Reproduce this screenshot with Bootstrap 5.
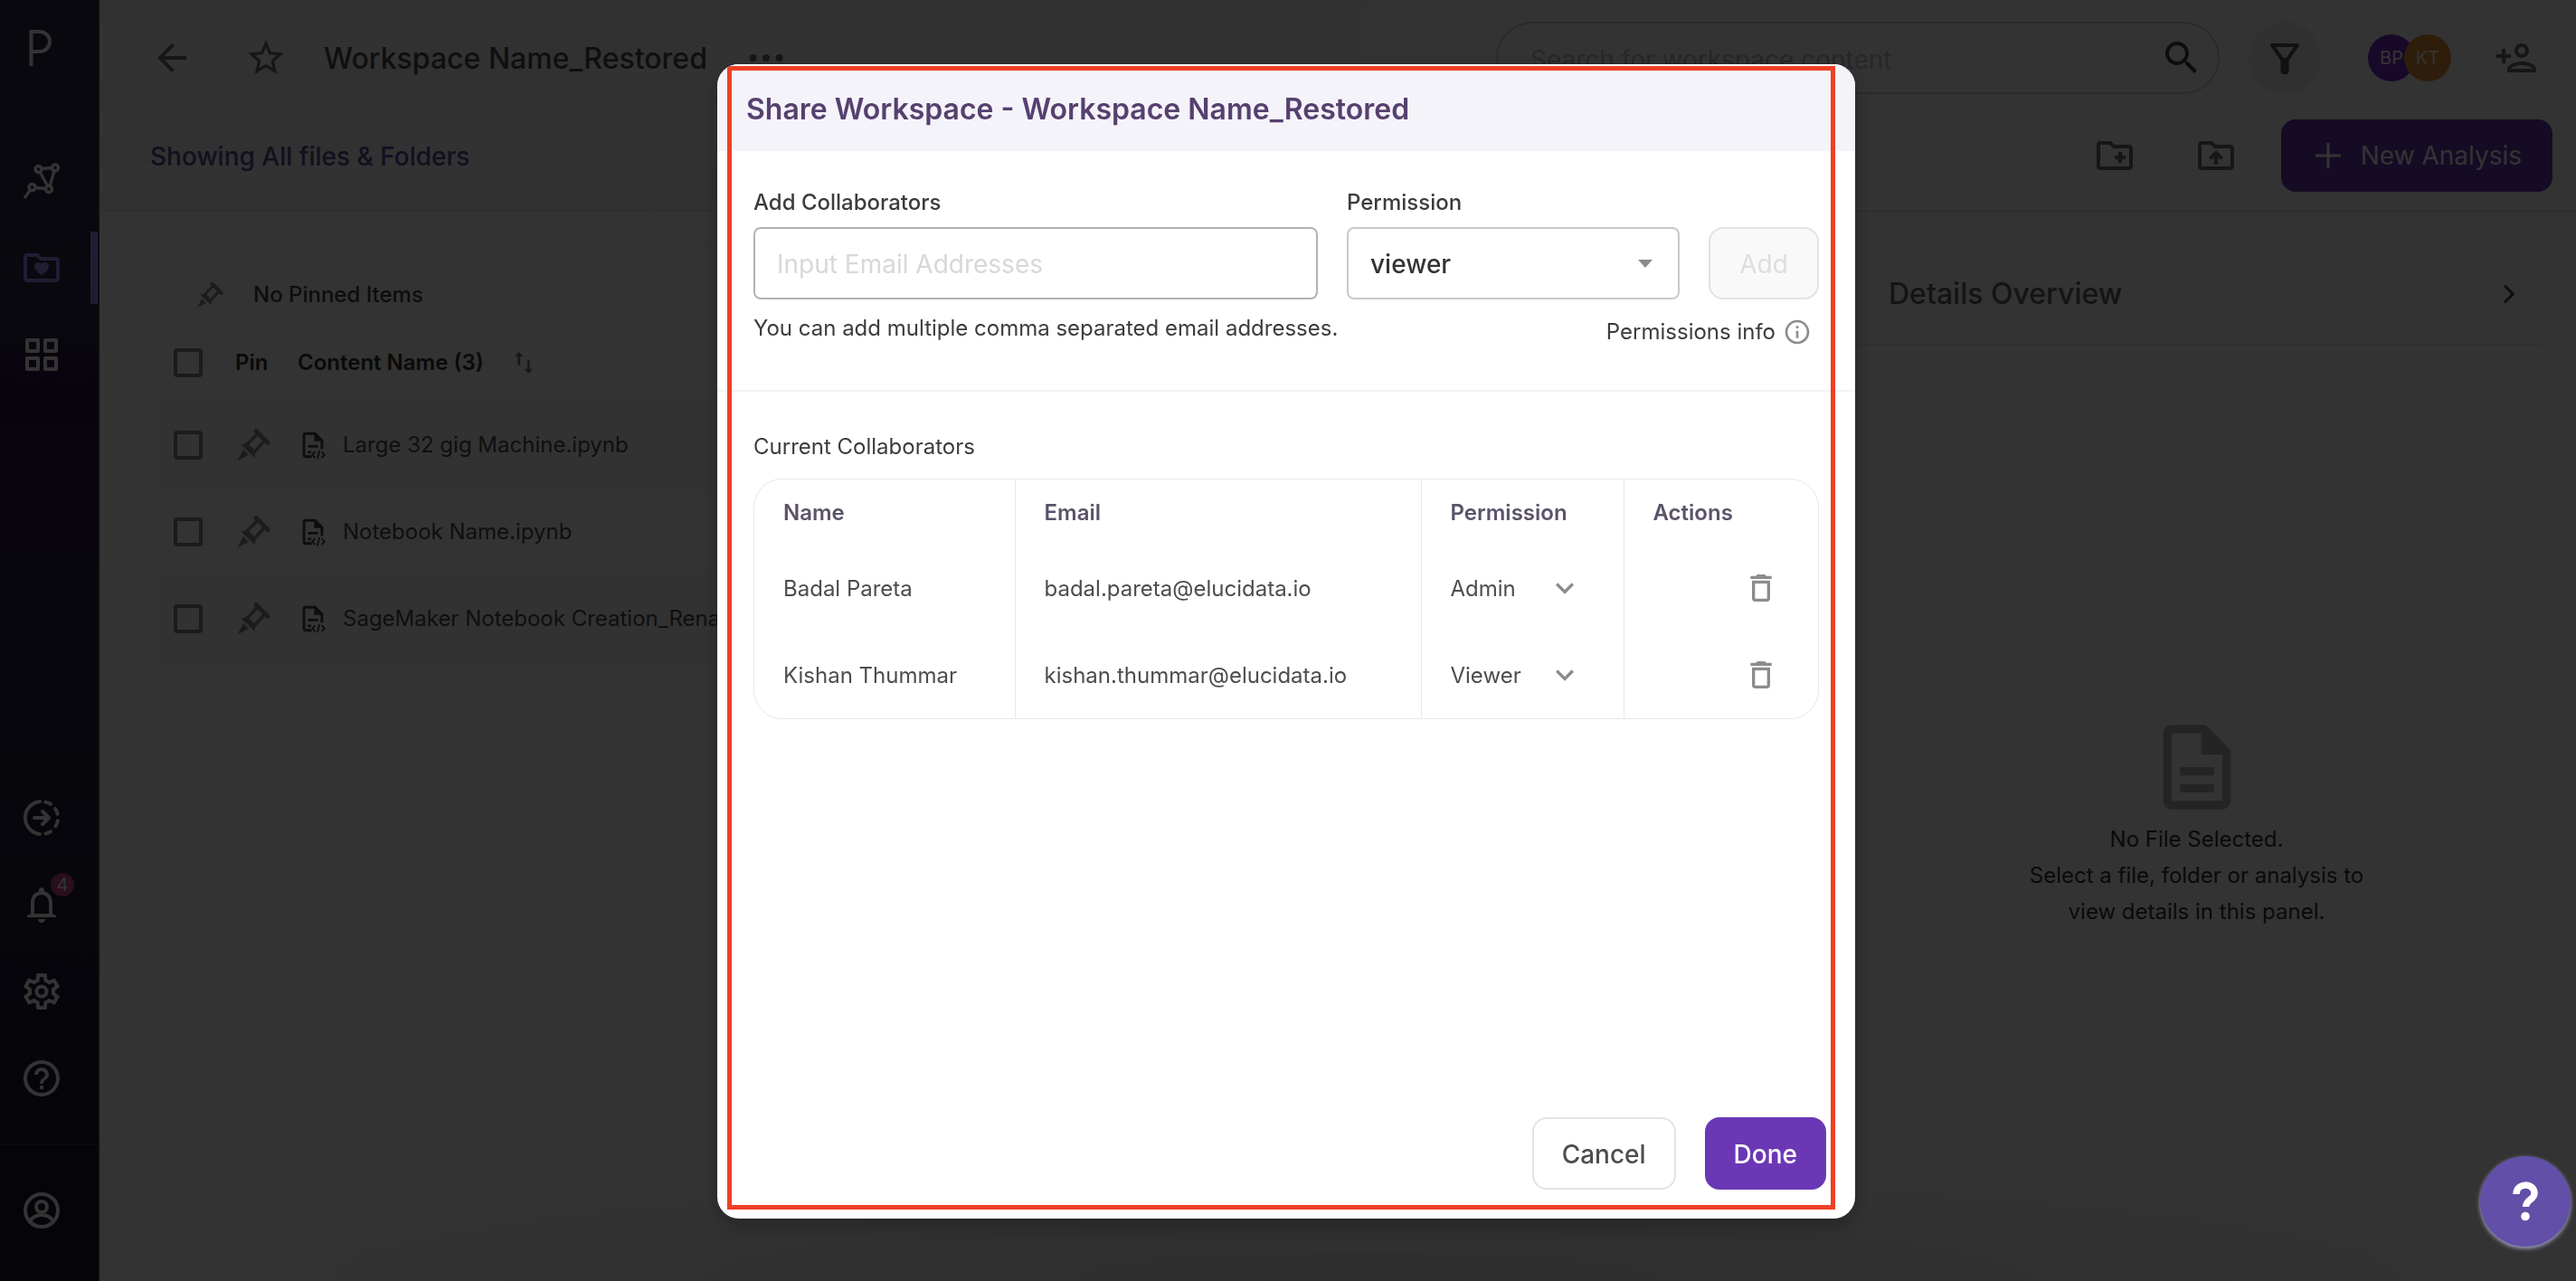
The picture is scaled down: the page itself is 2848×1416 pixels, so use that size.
<!DOCTYPE html>
<html lang="en">
<head>
<meta charset="utf-8">
<meta name="viewport" content="width=device-width, initial-scale=1">
<title>Share Workspace</title>
<link href="https://cdn.jsdelivr.net/npm/bootstrap@5.3.0/dist/css/bootstrap.min.css" rel="stylesheet">
<style>
  :root { --bs-body-font-family: Inter, "Noto Sans", sans-serif; --bs-body-font-size: 24px; --bs-body-line-height: 32px; --ink: #4d4d4d; --violet: #6b38b5; }
  body { color: var(--ink); }
  svg { display: block; flex: none; fill: currentColor; }
  .ic { width: 48px; height: 48px; }
  .ic-md { width: 40px; height: 40px; }
  .ic-sm { width: 32px; height: 32px; }
  .plain { border: 0; background: none; padding: 0; color: inherit; display: block; }
  .ln { fill: none; stroke: currentColor; stroke-width: 2; stroke-linecap: round; stroke-linejoin: round; }

  /* sidebar */
  .side { width: 110px; flex: none; color: #fff; border-right: 2px solid #3c3c55; background: linear-gradient(#2a2c46, #2d2d4a 26%, #2d1645 28%, #2a1c44 40%, #23233f 60%, #14142d); }
  .side a { display: flex; align-items: center; height: 80px; padding-left: 22px; color: #fff; position: relative; }
  .side a.current { color: #a091ff; border-right: 8px solid #a091ff; }
  .side .logo { height: 104px; }
  .side-top { gap: 16px; }
  .side-top .logo + a { margin-top: 40px; }
  .side-bottom { gap: 16px; padding-bottom: 32px; }
  .side-foot { border-top: 2px solid #32324b; padding: 32px 0 38px; }
  .bubble { position: absolute; left: 56px; top: 5px; width: 26px; height: 26px; line-height: 26px; font-size: 20px; text-align: center; border-radius: 50%; background: #d2468c; }

  /* top area */
  .top { position: relative; padding: 24px 26px 20px 56px; border-bottom: 2px solid #e9e9ee; overflow: hidden; color: #707070; }
  .waves { position: absolute; left: 0; top: 0; width: 1400px; height: 100%; }
  .bar { position: relative; height: 80px; }
  .bar-2 { margin-top: 28px; }
  .title { font-size: 32px; font-weight: 500; line-height: 40px; margin: 2px 40px 0; color: #4d4d4d; }
  .crumb { font-size: 28px; font-weight: 500; line-height: 40px; padding-top: 2px; color: #5f4a94; }
  .find { width: 800px; height: 80px; border: 2px solid #cfcaf0; border-radius: 40px; padding: 0 16px 0 36px; background: #fff; color: #444; }
  .find input { border: 0; outline: 0; font-size: 28px; background: none; padding: 3px 0 0; }
  .find input::placeholder { color: #c0c0c0; opacity: 1; }
  .round { width: 80px; height: 80px; border-radius: 50%; background: #f0f0f6; display: grid; place-items: center; color: #555; }
  .who { width: 52px; height: 52px; line-height: 52px; font-size: 20px; border-radius: 50%; text-align: center; color: #fff; }
  .who + .who { margin-left: -12px; }
  .btn-xl { --bs-btn-font-size: 28px; --bs-btn-border-radius: 16px; --bs-btn-border-width: 2px; --bs-btn-line-height: 40px; height: 80px; font-weight: 500; }
  .btn-violet { --bs-btn-bg: var(--violet); --bs-btn-color: #fff; --bs-btn-border-color: var(--violet); --bs-btn-hover-bg: #5b2da0; --bs-btn-hover-color: #fff; }
  .new { padding: 0 32px 0 26px; gap: 12px; font-weight: 400; }

  /* content panel */
  .stage { background: radial-gradient(ellipse 1300px 130px at 1400px 100%, #e0e0e0, #fff 100%); padding: 34px 27px 32px 42px; }
  .panel { border: 2px solid #f2f2f5; border-radius: 32px; }
  .files { padding: 24px; }
  .pinned { height: 64px; font-weight: 500; color: #444; gap: 32px; padding-left: 38px; }
  .grid { width: 100%; table-layout: fixed; }
  .grid th { height: 86px; font-weight: 600; color: #333; }
  .grid td { height: 96px; border-top: 2px solid #f3f3f3; }
  .grid tbody tr:nth-child(odd) { background: #fafafa; }
  .grid tbody tr:last-child td { border-bottom: 2px solid #f3f3f3; }
  .grid .c1 { width: 70px; padding-left: 14px; }
  .grid .c2 { width: 80px; padding-left: 12px; }
  .file-link { display: flex; align-items: center; gap: 16px; white-space: nowrap; color: inherit; text-decoration: none; }
  .file-link svg { width: 34px; height: 34px; }
  .tick { appearance: none; display: block; width: 32px; height: 32px; margin: 0; border: 4px solid #858585; border-radius: 4px; background: none; }
  .details { width: 773px; flex: none; }
  .details-head { height: 112px; padding: 0 22px 0 42px; margin-right: 8px; border-bottom: 2px solid #f0f0f0; }
  .details-head h2 { font-size: 32px; line-height: 40px; font-weight: 500; color: #666; margin: 0; }
  .empty { padding: 56px 8px 0 0; line-height: 40px; color: #333; }
  .empty svg { width: 112px; height: 112px; color: #b4b4b4; margin-bottom: 4px; }

  /* dialog */
  .modal-backdrop { --bs-backdrop-opacity: .8; }
  .modal-dialog { --bs-modal-width: 1258px; --bs-modal-margin: 71px; margin-bottom: 0; }
  .modal-content { --bs-modal-border-radius: 24px; --bs-modal-border-width: 0; min-height: calc(100vh - 140px); color: #3c3c3c; overflow: hidden; box-shadow: 0 8px 24px #0004; }
  .modal-header { background: #f5f3fa; height: 96px; padding: 2px 32px 0; border: 0; border-top: 2px solid #fff; border-radius: 0; }
  .modal-title { font-size: 32px; line-height: 40px; font-weight: 600; color: #56406f; }
  .modal-body { padding: 0; }
  .block-a { padding: 41px 40px 44px; border-bottom: 2px solid #f2f1f8; }
  .block-b { padding: 45px 40px; }
  .fields { gap: 32px; }
  .fields label { display: block; font-weight: 500; margin-bottom: 11px; }
  .box { display: block; width: 100%; height: 80px; border: 2px solid #b3b3b3; border-radius: 8px; padding: 2px 24px 0; font-size: 28px; background: #fff; color: #333; }
  .box::placeholder { color: #d8d8d8; opacity: 1; }
  .perm { width: 368px; }
  .perm .box { border-color: #c9c9c9; appearance: none; font-weight: 500; }
  .perm svg { position: absolute; right: 14px; top: 16px; color: #8c8c8c; pointer-events: none; }
  .btn-off { --bs-btn-disabled-color: #dedede; --bs-btn-disabled-bg: #f9f9f9; --bs-btn-disabled-border-color: #e3e2ea; --bs-btn-disabled-opacity: 1; width: 122px; padding: 2px 0 0; font-weight: 400; }
  .frame { border: 1px solid #e8e8ec; border-radius: 32px; }
  .people { width: 100%; table-layout: fixed; color: #4d4d4d; }
  .people th { height: 72px; font-weight: 600; color: #5b5368; }
  .people td { height: 96px; }
  .people th, .people td { padding: 2px 32px 0; }
  .people th + th, .people td + td { border-left: 1px solid #e8e8ec; }
  .people td:last-child { padding: 0 43px 0 0; }
  .people select { display: block; appearance: none; border: 0; background: none; padding: 0; width: 100%; color: inherit; }
  .pick { width: 148px; color: #4d4d4d; }
  .pick svg { position: absolute; right: 2px; top: -5px; color: #8c8c8c; pointer-events: none; }
  .modal-footer { border: 0; padding: 0 32px 32px; gap: 32px; }
  .modal-footer > * { margin: 0; }
  .btn-line { --bs-btn-color: #4d4d4d; --bs-btn-border-color: #e3e2ea; --bs-btn-bg: #fff; padding: 2px 31px 0; }
  .btn-done { padding: 2px 30px 0; }
  .callout-frame { position: absolute; inset: 2px 22px 10px 11px; border: 5px solid #ee4025; pointer-events: none; }
  .fab { position: fixed; right: 6px; bottom: 38px; z-index: 1080; width: 100px; height: 100px; border: 0; border-radius: 50%; background: #624fa8; color: #fff; box-shadow: 0 2px 5px #a9a9d0; display: grid; place-items: center; }
</style>
</head>
<body>
<svg width="0" height="0" class="position-absolute" aria-hidden="true"><defs>
  <g id="pin" fill="#8c8c8c"><path d="M23 4.500L36 17.500" fill="none" stroke="#8c8c8c" stroke-width="5" stroke-linecap="round"/><path d="M25 7L12 20.500M32.500 15L20.500 28.500M12 19.500L21 28.500" fill="none" stroke="#8c8c8c" stroke-width="3.600"/><path d="M6.500 19.500L14 18 22.500 26.500 21.500 34ZM9 25L15 31 2.500 37.500Z"/></g>
  <g id="nb"><path fill="#444" d="M6 2h8l6 6v7h-2V9h-5V4H6v16h5v2H6c-1.100 0-2-.9-2-2V4c0-1.100.9-2 2-2zm2 10h8v2H8zm0 4.500h2.500v2H8z"/><path d="M13.700 17L11.500 19.500l2.200 2.500M18.800 17l2.200 2.500-2.200 2.500M17 16.300l-1.500 6.500" fill="none" stroke="#444" stroke-width="1.300"/></g>
</defs></svg>

<div class="d-flex min-vh-100">
  <nav class="side d-flex flex-column justify-content-between" aria-label="Main">
    <div class="side-top d-flex flex-column">
      <a href="#" class="logo" aria-label="Home"><svg class="ic" viewBox="0 0 48 48"><path d="M12.500 45V7H22a11 11 0 0 1 0 22H12.500" fill="none" stroke="currentColor" stroke-width="4"/></svg></a>
      <a href="#" aria-label="Pipelines"><svg class="ic" viewBox="0 0 48 48"><g fill="none" stroke="currentColor" stroke-width="3.400"><circle cx="20.500" cy="11" r="3.500"/><circle cx="39" cy="9.500" r="3.500"/><circle cx="13.500" cy="31" r="3.500"/><circle cx="32" cy="33" r="3.500"/><path d="M24 10.500l11.500-1M38 13l-5 17M22 14l9 16M17 31.500l11.500 1M11.500 34L5 43"/></g></svg></a>
      <a href="#" class="current" aria-label="Workspaces"><svg class="ic" viewBox="0 0 24 24"><path d="M20 6h-8l-2-2H4c-1.100 0-2 .9-2 2v12c0 1.100.9 2 2 2h16c1.100 0 2-.9 2-2V8c0-1.100-.9-2-2-2zm0 12H4V6h5.200l2 2H20v10z"/><path d="M12 16.300C9 13.900 8 12.800 8 11.300 8 10 9 9 10.200 9c.7 0 1.400.3 1.800.9.4-.6 1.100-.9 1.800-.9C15 9 16 10 16 11.300c0 1.500-1 2.600-4 5z"/></svg></a>
      <a href="#" aria-label="Apps"><svg class="ic" viewBox="0 0 24 24"><g class="ln"><rect x="4" y="4" width="6" height="6"/><rect x="14" y="4" width="6" height="6"/><rect x="4" y="14" width="6" height="6"/><rect x="14" y="14" width="6" height="6"/></g></svg></a>
    </div>
    <div>
      <div class="side-bottom d-flex flex-column">
        <a href="#" aria-label="Activity"><svg class="ic" viewBox="0 0 24 24"><g class="ln"><path d="M11 3.050a9 9 0 0 0 0 17.900M14.200 3.300q1.500.3 2.800 1.100M19.500 7q1 1.300 1.300 2.900M20.900 13.700q-.3 1.500-1.100 2.900M17 19.600q-1.300.8-2.800 1.100M8 12h8M12.500 8.500L16 12l-3.500 3.500"/></g></svg></a>
        <a href="#" aria-label="Notifications"><svg class="ic" viewBox="0 0 24 24"><path d="M12 22c1.100 0 2-.9 2-2h-4c0 1.100.9 2 2 2zm6-5v-6c0-3.070-1.640-5.640-4.500-6.320V4c0-.83-.67-1.500-1.500-1.500s-1.500.67-1.500 1.500v.68C7.630 5.360 6 7.920 6 11v6l-2 1v1h16v-1l-2-1zm-2 0H8v-6c0-2.480 1.510-4.500 4-4.500s4 2.020 4 4.500v6z"/></svg><span class="bubble">4</span></a>
        <a href="#" aria-label="Settings"><svg class="ic" viewBox="0 0 24 24"><path fill-rule="evenodd" d="M9.250 22l-.4-3.200q-.325-.125-.612-.3t-.563-.375L4.700 19.375l-2.750-4.750 2.575-1.950Q4.500 12.500 4.500 12.338v-.675q0-.163.025-.338L1.950 9.375l2.750-4.750 2.975 1.250q.275-.2.575-.375t.6-.3l.4-3.200h5.500l.4 3.200q.325.125.613.3t.562.375l2.975-1.250 2.750 4.750-2.575 1.950q.025.175.025.338v.674q0 .163-.05.338l2.575 1.950-2.750 4.750-2.950-1.250q-.275.2-.575.375t-.6.3l-.4 3.200h-5.500Zm1.750-2h1.975l.35-2.650q.775-.2 1.438-.588t1.212-.937l2.475 1.025.975-1.700-2.150-1.625q.125-.35.175-.737T17.500 12q0-.4-.05-.787t-.175-.738l2.150-1.625-.975-1.700-2.475 1.050q-.55-.575-1.212-.962t-1.438-.588L13 4h-1.975l-.35 2.650q-.775.2-1.437.588t-1.213.937L5.550 7.150l-.975 1.700 2.150 1.600q-.125.375-.175.750t-.05.8q0 .4.05.775t.175.750l-2.150 1.625.975 1.700 2.475-1.050q.55.575 1.213.963t1.437.587L11 20Z"/><circle cx="12" cy="12" r="2.800" fill="none" stroke="currentColor" stroke-width="2"/></svg></a>
        <a href="#" aria-label="Help"><svg class="ic" viewBox="0 0 24 24"><path d="M11 18h2v-2h-2v2zm1-16C6.480 2 2 6.480 2 12s4.480 10 10 10 10-4.480 10-10S17.520 2 12 2zm0 18c-4.410 0-8-3.590-8-8s3.590-8 8-8 8 3.590 8 8-3.590 8-8 8zm0-14c-2.210 0-4 1.790-4 4h2c0-1.100.9-2 2-2s2 .9 2 2c0 2-3 1.750-3 5h2c0-2.250 3-2.500 3-5 0-2.210-1.790-4-4-4z"/></svg></a>
      </div>
      <div class="side-foot"><a href="#" aria-label="Account"><svg class="ic" viewBox="0 0 24 24"><g fill="none" stroke="currentColor" stroke-width="2"><circle cx="12" cy="12" r="9"/><circle cx="12" cy="10" r="3"/><path d="M5.500 18c1.500-2.500 4-3.500 6.500-3.500s5 1 6.500 3.500"/></g></svg></a></div>
    </div>
  </nav>

  <main class="flex-grow-1 d-flex flex-column" style="min-width:0">
    <header class="top">
      <svg class="waves" viewBox="0 0 1400 234" preserveAspectRatio="none" style="fill:#f9f9fd"><rect width="1400" height="234" fill="#f3f3f3"/><path d="M0 24Q150 15 330 0H650Q330 80 0 90ZM0 122Q500 105 900 0H1200Q720 140 0 151ZM0 182Q620 160 900 60L1400 0V60Q800 220 0 214Z"/><path d="M1400 0V234H600Q1150 180 1400 0Z" fill="#fafafa"/></svg>
      <div class="bar d-flex align-items-center">
        <a href="#" class="text-reset" aria-label="Back"><svg class="ic" viewBox="0 0 24 24"><path d="M20 11H7.830l5.590-5.590L12 4l-8 8 8 8 1.410-1.410L7.830 13H20v-2z"/></svg></a>
        <button class="plain" style="margin-left:56px" aria-label="Favourite"><svg class="ic" viewBox="0 0 24 24"><path d="M22 9.240l-7.190-.62L12 2 9.190 8.630 2 9.240l5.460 4.730L5.820 21 12 17.270 18.180 21l-1.630-7.030L22 9.240zM12 15.400l-3.760 2.270 1-4.280-3.320-2.880 4.380-.38L12 6.100l1.710 4.040 4.380.38-3.320 2.880 1 4.280L12 15.400z"/></svg></button>
        <h1 class="title">Workspace Name_Restored</h1>
        <button class="plain" aria-label="More"><svg class="ic" viewBox="0 0 48 48"><circle cx="10.500" cy="24" r="4"/><circle cx="25" cy="24" r="4"/><circle cx="39.500" cy="24" r="4"/></svg></button>
        <div class="find d-flex align-items-center ms-auto">
          <input class="flex-grow-1" type="search" aria-label="Search" placeholder="Search for workspace content">
          <svg class="ic" viewBox="0 0 24 24"><path d="M15.500 14h-.79l-.28-.27C15.410 12.590 16 11.110 16 9.500 16 5.910 13.090 3 9.500 3S3 5.910 3 9.500 5.910 16 9.500 16c1.610 0 3.090-.59 4.230-1.570l.27.28v.79l5 4.990L20.490 19l-4.990-5zm-6 0C7.010 14 5 11.990 5 9.500S7.010 5 9.500 5 14 7.010 14 9.500 11.990 14 9.500 14z"/></svg>
        </div>
        <button class="plain round" style="margin:0 52px 0 32px" aria-label="Filter"><svg class="ic" viewBox="0 0 24 24"><path d="M5 5h14l-5.700 8v6.200q0 .8-1.300.8t-1.300-.8V13Z" fill="none" stroke="currentColor" stroke-width="2" stroke-linejoin="round"/><path d="M10.500 12h3v7.500h-3z"/></svg></button>
        <div class="d-flex"><span class="who" style="background:#7b2fc9">BP</span><span class="who" style="background:#e8923a">KT</span></div>
        <button class="plain me-3" style="margin-left:48px" aria-label="Add person"><svg class="ic" viewBox="0 0 24 24"><path d="M15 12c2.210 0 4-1.790 4-4s-1.790-4-4-4-4 1.790-4 4 1.790 4 4 4zm0-6c1.100 0 2 .9 2 2s-.9 2-2 2-2-.9-2-2 .9-2 2-2zm0 8c-2.670 0-8 1.340-8 4v2h16v-2c0-2.660-5.330-4-8-4zm-6 4c.22-.72 3.310-2 6-2 2.700 0 5.800 1.290 6 2H9zm-3-3v-3h3v-2H6V7H4v3H1v2h3v3z"/></svg></button>
      </div>
      <div class="bar bar-2 d-flex align-items-center">
        <span class="crumb me-auto">Showing All files &amp; Folders</span>
        <button class="plain" aria-label="New folder"><svg class="ic" viewBox="0 0 24 24"><path d="M20 6h-8l-2-2H4c-1.110 0-2 .9-2 2v12c0 1.100.89 2 2 2h16c1.110 0 2-.9 2-2V8c0-1.110-.89-2-2-2zm0 12H4V6h5.170l2 2H20v10zm-8-4h2v2h2v-2h2v-2h-2v-2h-2v2h-2z"/></svg></button>
        <button class="plain" style="margin:0 48px 0 64px" aria-label="Upload"><svg class="ic" viewBox="0 0 24 24"><path d="M20 6h-8l-2-2H4c-1.110 0-2 .9-2 2v12c0 1.100.89 2 2 2h16c1.110 0 2-.9 2-2V8c0-1.110-.89-2-2-2zm0 12H4V6h5.170l2 2H20v10zM8 13.010l1.410 1.410L11 12.840V17h2v-4.160l1.590 1.590L16 13.010 12.010 9 8 13.010z"/></svg></button>
        <button class="btn btn-xl btn-violet new d-flex align-items-center"><svg class="ic" viewBox="0 0 24 24"><path d="M19 12.800h-6.200V19h-1.600v-6.200H5v-1.600h6.200V5h1.600v6.200H19z"/></svg>New Analysis</button>
      </div>
    </header>

    <div class="stage flex-grow-1 d-flex">
      <div class="panel flex-grow-1 d-flex">
        <section class="files flex-grow-1" style="min-width:0">
          <div class="pinned d-flex align-items-center"><svg viewBox="0 0 40 40" class="ic-sm"><use href="#pin"/></svg>No Pinned Items</div>
          <table class="grid">
            <thead><tr><th class="c1"><input type="checkbox" class="tick" aria-label="Select all"></th><th class="c2">Pin</th><th><span class="d-flex align-items-center" style="gap:28px">Content Name (3)<svg class="ic-sm" viewBox="0 0 24 24" style="color:#777"><path d="M8 3L4.500 7H7v7h2V7h2.500zM17 17v-7h-2v7h-2.500l3.500 4 3.500-4z"/></svg></span></th></tr></thead>
            <tbody>
              <tr><td class="c1"><input type="checkbox" class="tick" aria-label="Select file 1"></td><td class="c2"><button class="plain" aria-label="Pin file 1"><svg class="ic-md" viewBox="0 0 40 40"><use href="#pin"/></svg></button></td><td><a href="#" class="file-link"><svg viewBox="0 0 24 24"><use href="#nb"/></svg>Large 32 gig Machine.ipynb</a></td></tr>
              <tr><td class="c1"><input type="checkbox" class="tick" aria-label="Select file 2"></td><td class="c2"><button class="plain" aria-label="Pin file 2"><svg class="ic-md" viewBox="0 0 40 40"><use href="#pin"/></svg></button></td><td><a href="#" class="file-link"><svg viewBox="0 0 24 24"><use href="#nb"/></svg>Notebook Name.ipynb</a></td></tr>
              <tr><td class="c1"><input type="checkbox" class="tick" aria-label="Select file 3"></td><td class="c2"><button class="plain" aria-label="Pin file 3"><svg class="ic-md" viewBox="0 0 40 40"><use href="#pin"/></svg></button></td><td><a href="#" class="file-link"><svg viewBox="0 0 24 24"><use href="#nb"/></svg>SageMaker Notebook Creation_Renamed.ipynb</a></td></tr>
            </tbody>
          </table>
        </section>
        <aside class="details d-flex flex-column">
          <div class="details-head d-flex align-items-center justify-content-between"><h2>Details Overview</h2><button class="plain" aria-label="Collapse"><svg class="ic-sm" viewBox="0 0 24 24"><path d="M9 5l7 7-7 7" fill="none" stroke="currentColor" stroke-width="2.400"/></svg></button></div>
          <div class="empty flex-grow-1 d-flex flex-column align-items-center justify-content-center text-center"><svg viewBox="0 0 24 24"><path d="M8 16h8v2H8zm0-4h8v2H8zm6-10H6c-1.100 0-2 .9-2 2v16c0 1.100.89 2 1.990 2H18c1.100 0 2-.9 2-2V8l-6-6zm4 18H6V4h7v5h5v11z"/></svg><span>No File Selected.<br>Select a file, folder or analysis to<br>view details in this panel.</span></div>
        </aside>
      </div>
    </div>
  </main>
</div>

<div class="modal-backdrop show"></div>
<div class="modal show d-block pe-1" role="dialog" aria-modal="true" aria-labelledby="dlgTitle">
  <div class="modal-dialog">
    <div class="modal-content">
      <div class="modal-header"><h2 class="modal-title" id="dlgTitle">Share Workspace - Workspace Name_Restored</h2></div>
      <div class="modal-body">
        <div class="block-a">
          <div class="fields d-flex align-items-end">
            <div class="flex-grow-1"><label for="mails">Add Collaborators</label><input id="mails" class="box" type="text" placeholder="Input Email Addresses"></div>
            <div class="perm"><label for="perm">Permission</label><div class="position-relative"><select id="perm" class="box"><option>viewer</option><option>writer</option><option>admin</option></select><svg class="ic" viewBox="0 0 24 24"><path d="M8 10l4 4.500 4-4.500z"/></svg></div></div>
            <button class="btn btn-xl btn-off" disabled>Add</button>
          </div>
          <div class="d-flex justify-content-between mt-3">
            <span>You can add multiple comma separated email addresses.</span>
            <span class="d-flex align-items-center gap-2 pe-2" style="height:40px">Permissions info<svg class="ic-sm" viewBox="0 0 24 24" style="color:#8c8c8c"><path d="M11 7h2v2h-2zm0 4h2v6h-2zm1-9C6.480 2 2 6.480 2 12s4.480 10 10 10 10-4.480 10-10S17.520 2 12 2zm0 18c-4.410 0-8-3.590-8-8s3.590-8 8-8 8 3.590 8 8-3.590 8-8 8z"/></svg></span>
          </div>
        </div>
        <div class="block-b">
          <div style="margin-bottom:19px">Current Collaborators</div>
          <div class="frame">
            <table class="people">
              <colgroup><col style="width:288px"><col style="width:449px"><col style="width:224px"><col></colgroup>
              <thead><tr><th>Name</th><th>Email</th><th>Permission</th><th>Actions</th></tr></thead>
              <tbody>
                <tr><td>Badal Pareta</td><td>badal.pareta@elucidata.io</td><td><div class="pick position-relative"><select aria-label="Permission of Badal Pareta"><option>Admin</option></select><svg class="ic-md" viewBox="0 0 24 24"><path d="M7.410 8.590L12 13.170l4.590-4.580L18 10l-6 6-6-6 1.410-1.410z"/></svg></div></td><td><button class="plain ms-auto" aria-label="Remove Badal Pareta"><svg class="ic-md" viewBox="0 0 24 24" style="color:#8c8c8c"><path d="M6 19c0 1.100.9 2 2 2h8c1.100 0 2-.9 2-2V7H6v12zM8 9h8v10H8V9zm7.500-5l-1-1h-5l-1 1H5v2h14V4z"/></svg></button></td></tr>
                <tr><td>Kishan Thummar</td><td>kishan.thummar@elucidata.io</td><td><div class="pick position-relative"><select aria-label="Permission of Kishan Thummar"><option>Viewer</option></select><svg class="ic-md" viewBox="0 0 24 24"><path d="M7.410 8.590L12 13.170l4.590-4.580L18 10l-6 6-6-6 1.410-1.410z"/></svg></div></td><td><button class="plain ms-auto" aria-label="Remove Kishan Thummar"><svg class="ic-md" viewBox="0 0 24 24" style="color:#8c8c8c"><path d="M6 19c0 1.100.9 2 2 2h8c1.100 0 2-.9 2-2V7H6v12zM8 9h8v10H8V9zm7.500-5l-1-1h-5l-1 1H5v2h14V4z"/></svg></button></td></tr>
              </tbody>
            </table>
          </div>
        </div>
      </div>
      <div class="modal-footer"><button class="btn btn-xl btn-line">Cancel</button><button class="btn btn-xl btn-violet btn-done">Done</button></div>
      <div class="callout-frame"></div>
    </div>
  </div>
</div>
<button class="fab" aria-label="Support"><svg width="28" height="44" viewBox="0 0 28 44"><path d="M4 14C4 1 24 1 24 13c0 7-9.500 7.500-9.500 15" fill="none" stroke="#fff" stroke-width="7.500"/><circle cx="14" cy="38.500" r="4.800"/></svg></button>
<script src="https://cdn.jsdelivr.net/npm/bootstrap@5.3.0/dist/js/bootstrap.bundle.min.js"></script>
</body>
</html>
